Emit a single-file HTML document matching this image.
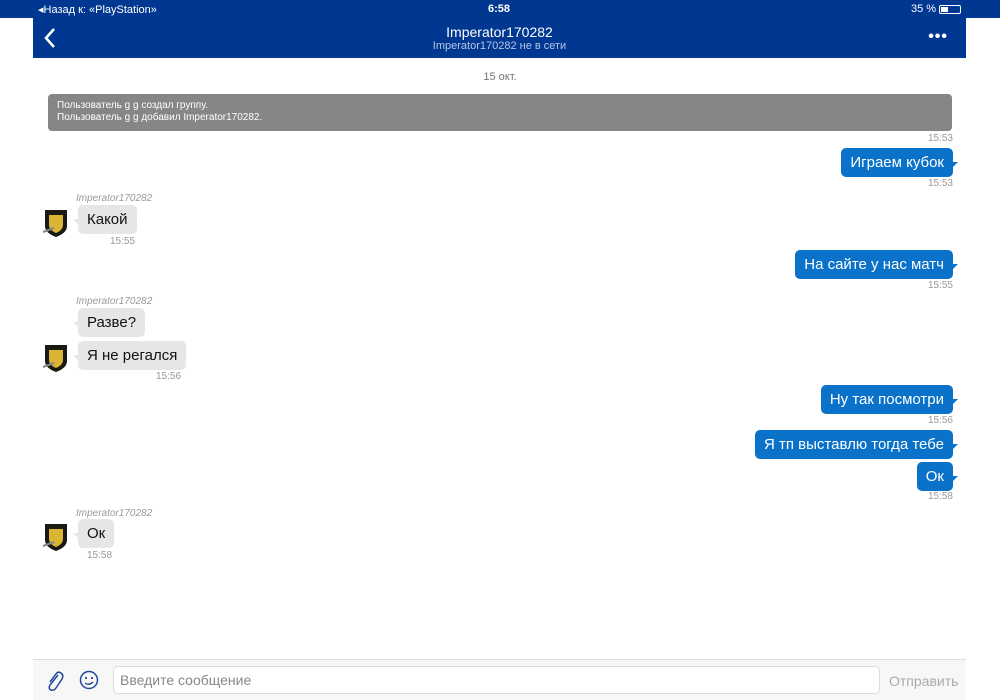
<!DOCTYPE html>
<html><head><meta charset="utf-8"><style>
*{margin:0;padding:0;box-sizing:border-box}
body{width:1000px;height:700px;position:relative;background:#fff;font-family:"Liberation Sans",sans-serif;overflow:hidden}
.a{position:absolute}
.sb{top:0;left:0;width:1000px;height:18px;background:#003791;color:#fff;font-size:11px}
.nav{top:18px;left:33px;width:933px;height:40px;background:#003791;color:#fff;text-align:center}
.bo{position:absolute;height:29px;border-radius:5px;font-size:15px;line-height:29px;padding:0 9px;white-space:nowrap}
.out{background:#0a72c9;color:#fff}
.in{background:#e6e6e6;color:#111}
.t{position:absolute;font-size:10px;color:#999}
.n{position:absolute;font-size:10px;color:#999;font-style:italic}
.out:after{content:"";position:absolute;right:-5px;top:14px;border-left:6px solid #0a72c9;border-bottom:6px solid transparent}
.in:before{content:"";position:absolute;left:-5px;top:14px;border-right:6px solid #e6e6e6;border-bottom:6px solid transparent}
</style></head><body>
<div class="a sb"><span class="a" style="left:38px;top:3px">◂Назад к: «PlayStation»</span><span class="a" style="left:488px;top:3px;font-weight:bold">6:58</span><span class="a" style="left:911px;top:3px">35 %</span><span class="a" style="left:939px;top:5px;width:22px;height:9px;border:1px solid #fff;border-radius:2px"><span class="a" style="left:1px;top:1px;width:7px;height:5px;background:#fff"></span></span></div>
<div class="a nav">
<svg class="a" style="left:10px;top:9px" width="14" height="22"><path d="M11 2 L3 11 L11 20" stroke="#fff" stroke-width="2.6" fill="none"/></svg>
<div style="font-size:14px;padding-top:6px">Imperator170282</div>
<div style="font-size:11px;color:#b8c6e6;margin-top:0px">Imperator170282 не в сети</div>
<span class="a" style="right:18px;top:10px;font-size:16px;letter-spacing:1px;font-weight:bold">•••</span>
</div>
<div class="a" style="left:0;top:71px;width:1000px;text-align:center;font-size:11px;color:#777">15 окт.</div>
<div class="a" style="left:48px;top:94px;width:904px;height:37px;background:#868686;border-radius:4px;color:#fff;font-size:10px;padding:6px 9px;line-height:12px">Пользователь g g создал группу.<br>Пользователь g g добавил Imperator170282.</div>
<div class="t" style="right:47px;top:133px">15:53</div>

<div class="bo out" style="right:47px;top:148px">Играем кубок</div>
<div class="t" style="right:47px;top:178px">15:53</div>

<div class="n" style="left:76px;top:193px">Imperator170282</div>
<div class="bo in" style="left:78px;top:205px">Какой</div>
<div class="t" style="left:110px;top:236px">15:55</div>

<div class="bo out" style="right:47px;top:250px">На сайте у нас матч</div>
<div class="t" style="right:47px;top:280px">15:55</div>

<div class="n" style="left:76px;top:296px">Imperator170282</div>
<div class="bo in" style="left:78px;top:308px">Разве?</div>
<div class="bo in" style="left:78px;top:341px">Я не регался</div>
<div class="t" style="left:156px;top:371px">15:56</div>

<div class="bo out" style="right:47px;top:385px">Ну так посмотри</div>
<div class="t" style="right:47px;top:415px">15:56</div>
<div class="bo out" style="right:47px;top:430px">Я тп выставлю тогда тебе</div>
<div class="bo out" style="right:47px;top:462px">Ок</div>
<div class="t" style="right:47px;top:491px">15:58</div>

<div class="n" style="left:76px;top:508px">Imperator170282</div>
<div class="bo in" style="left:78px;top:519px">Ок</div>
<div class="t" style="left:87px;top:550px">15:58</div>

<svg class="a" style="left:42px;top:208px" width="28" height="30" viewBox="0 0 28 30"><path d="M3 2 H25 V18 Q25 25 14 29 Q3 25 3 18Z" fill="#1a1a12"/><path d="M7 7 H21 V17 Q21 22 14 25 Q7 22 7 17Z" fill="#d9b533"/><path d="M1 24 L12 20" stroke="#888" stroke-width="2"/></svg>
<svg class="a" style="left:42px;top:343px" width="28" height="30" viewBox="0 0 28 30"><path d="M3 2 H25 V18 Q25 25 14 29 Q3 25 3 18Z" fill="#1a1a12"/><path d="M7 7 H21 V17 Q21 22 14 25 Q7 22 7 17Z" fill="#d9b533"/><path d="M1 24 L12 20" stroke="#888" stroke-width="2"/></svg>
<svg class="a" style="left:42px;top:522px" width="28" height="30" viewBox="0 0 28 30"><path d="M3 2 H25 V18 Q25 25 14 29 Q3 25 3 18Z" fill="#1a1a12"/><path d="M7 7 H21 V17 Q21 22 14 25 Q7 22 7 17Z" fill="#d9b533"/><path d="M1 24 L12 20" stroke="#888" stroke-width="2"/></svg>

<div class="a" style="left:33px;top:659px;width:933px;height:41px;background:#f7f7f7;border-top:1px solid #ddd">
<svg class="a" style="left:12px;top:10px" width="20" height="22" viewBox="0 0 20 22"><path d="M13 5 L5 15 Q3 19 6 20 Q9 21 11 18 L17 9 Q19 5 16 3 Q13 1 11 4 L5 12" stroke="#22489a" stroke-width="1.5" fill="none"/></svg>
<svg class="a" style="left:46px;top:10px" width="20" height="20"><circle cx="10" cy="10" r="8.5" stroke="#22489a" stroke-width="1.5" fill="none"/><circle cx="7" cy="8" r="1.1" fill="#22489a"/><circle cx="13" cy="8" r="1.1" fill="#22489a"/><path d="M6 13 Q10 16 14 12" stroke="#22489a" stroke-width="1.4" fill="none"/></svg>
<div class="a" style="left:80px;top:6px;width:767px;height:28px;background:#fff;border:1px solid #ddd;border-radius:5px;font-size:14px;color:#888;padding:6px 6px;line-height:15px">Введите сообщение</div>
<div class="a" style="left:856px;top:13px;font-size:14px;color:#aaa">Отправить</div>
</div>
</body></html>
